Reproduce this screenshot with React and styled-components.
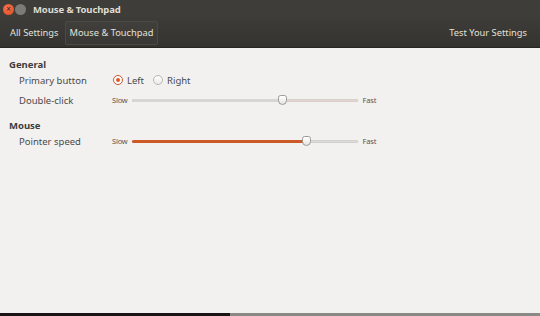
import React from "react";
import styled, { createGlobalStyle } from "styled-components";

const Global = createGlobalStyle`
  html, body { margin: 0; padding: 0; background: #f2f1f0; }
  body { font-family: "Noto Sans", "DejaVu Sans", sans-serif; font-size: 10px; color: #3c3c3c; }
`;

const Window = styled.div`
  width: 540px;
  height: 316px;
  display: flex;
  flex-direction: column;
  overflow: hidden;
  background: #f2f1f0;
`;

const TitleBar = styled.div`
  height: 18px;
  display: flex;
  align-items: center;
  padding: 0 0 0 3px;
  background: #3e3d39;
  color: #dfdbd2;
`;

const WinButton = styled.span`
  width: 11px;
  height: 11px;
  border-radius: 50%;
  margin-right: 1px;
  background: ${p => (p.$close ? "radial-gradient(circle at 40% 35%, #f37458, #df4a16)" : "#7c7b76")};
  display: inline-flex;
  align-items: center;
  justify-content: center;
  color: #3c1a0d;
  font-size: 8px;
  line-height: 1;
`;

const Title = styled.span`
  margin-left: 6px;
  font-weight: bold;
  font-size: 9.5px;
  letter-spacing: -0.1px;
`;

const Toolbar = styled.div`
  height: 29px;
  display: flex;
  align-items: center;
  padding: 0 7px 0 5px;
  background: linear-gradient(#3d3c38, #34332f);
  border-bottom: 1px solid #27261f;
  color: #e3e0d8;
`;

const Crumb = styled.span`
  padding: 3px 4px;
  font-size: 9.3px;
  border: 1px solid ${p => (p.$active ? "#4b4a45" : "transparent")};
  border-radius: 2px;
  background: ${p => (p.$active ? "linear-gradient(#403f3b, #393834)" : "transparent")};
  margin-right: 1px;
  height: 16px;
  line-height: 16px;
`;

const Spacer = styled.div`
  flex: 1;
`;

const Content = styled.div`
  flex: 1;
  padding: 12px 0 0 9px;
  display: flex;
  flex-direction: column;
`;

const Section = styled.div`
  font-weight: bold;
  font-size: 9.5px;
  color: #3c3c3c;
  height: 10px;
  line-height: 10px;
  margin-top: ${p => p.$gap || 0}px;
`;

const Row = styled.div`
  display: grid;
  grid-template-columns: 93px 1fr;
  align-items: center;
  height: 20px;
  padding-left: 10px;
`;

const Label = styled.span`
  font-size: 9.5px;
  color: #4a4a4a;
`;

const Radios = styled.div`
  display: flex;
  align-items: center;
  padding-left: 1px;
`;

const Radio = styled.span`
  width: 10px;
  height: 10px;
  border-radius: 50%;
  box-sizing: border-box;
  border: 1px solid ${p => (p.$on ? "#c6572a" : "#b8b6b2")};
  background: ${p => (p.$on ? "#fff" : "linear-gradient(#fff, #ebeae8)")};
  display: inline-flex;
  align-items: center;
  justify-content: center;
  &::after {
    content: "";
    width: 4px;
    height: 4px;
    border-radius: 50%;
    background: ${p => (p.$on ? "#dd5a22" : "transparent")};
  }
`;

const RadioText = styled.span`
  margin: 0 9px 0 4px;
  font-size: 9.5px;
  color: #4a4a4a;
`;

const SliderRow = styled.div`
  display: flex;
  align-items: center;
`;

const Tiny = styled.span`
  font-size: 7.5px;
  color: #555;
  letter-spacing: -0.2px;
`;

const Track = styled.div`
  position: relative;
  width: 226px;
  height: 3px;
  margin: 0 5px 0 4px;
  background: ${p => p.$rest};
  border-radius: 2px;
  box-shadow: inset 0 0 0 1px #d2d0cc;
`;

const Fill = styled.div`
  height: 100%;
  border-radius: 2px;
  background: ${p => p.$color};
`;

const Knob = styled.div`
  position: absolute;
  top: -4px;
  width: 9px;
  height: 10px;
  margin-left: -4px;
  box-sizing: border-box;
  border: 1px solid #9d9a95;
  border-radius: 3px 3px 5px 5px;
  background: linear-gradient(#ffffff, #e6e4e1);
`;

const BottomStrip = styled.div`
  height: 3px;
  display: flex;
`;

const StripPart = styled.div`
  width: ${p => p.$w}px;
  flex: ${p => (p.$w ? "none" : 1)};
  background: ${p => p.$c};
`;

const Slider = ({ value, fill, rest }) => (
  <SliderRow>
    <Tiny>Slow</Tiny>
    <Track $rest={rest}>
      <Fill $color={fill} style={{ width: `${value * 100}%` }} />
      <Knob style={{ left: `${value * 100}%` }} />
    </Track>
    <Tiny>Fast</Tiny>
  </SliderRow>
);

export default function App() {
  return (
    <Window>
      <Global />
      <TitleBar>
        <WinButton $close>×</WinButton>
        <WinButton />
        <Title>Mouse &amp; Touchpad</Title>
      </TitleBar>
      <Toolbar>
        <Crumb>All Settings</Crumb>
        <Crumb $active>Mouse &amp; Touchpad</Crumb>
        <Spacer />
        <Crumb>Test Your Settings</Crumb>
      </Toolbar>
      <Content>
        <Section>General</Section>
        <Row>
          <Label>Primary button</Label>
          <Radios>
            <Radio $on />
            <RadioText>Left</RadioText>
            <Radio />
            <RadioText>Right</RadioText>
          </Radios>
        </Row>
        <Row>
          <Label>Double-click</Label>
          <Slider value={0.665} fill="#d8d6d2" rest="#ecd3cc" />
        </Row>
        <Section $gap={11}>Mouse</Section>
        <Row>
          <Label>Pointer speed</Label>
          <Slider value={0.77} fill="#cc5a26" rest="#dedcd8" />
        </Row>
      </Content>
      <BottomStrip>
        <StripPart $w={230} $c="#1a1416" />
        <StripPart $c="#8a8986" />
      </BottomStrip>
    </Window>
  );
}
